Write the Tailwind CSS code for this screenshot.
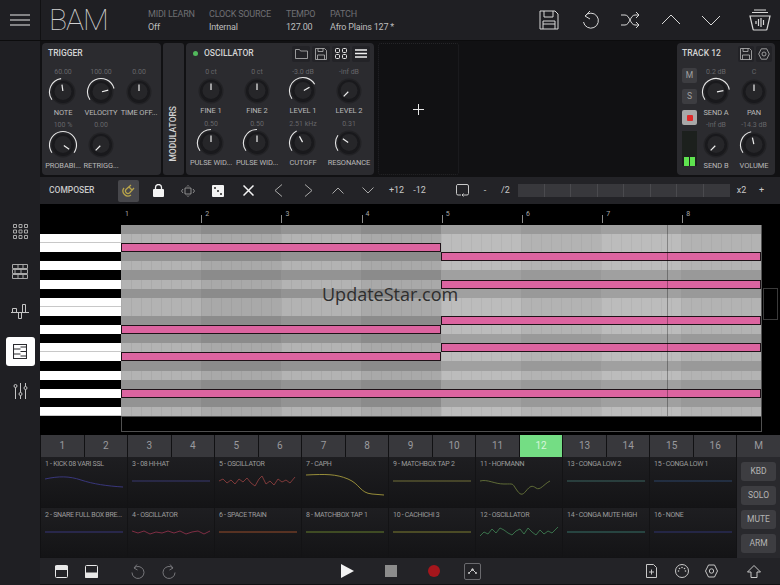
<!doctype html>
<html lang="en">
  <head>
    <meta charset="UTF-8" />
    <title>BAM</title>
    <script src="https://cdn.jsdelivr.net/npm/@tailwindcss/browser@4"></script>
  </head>
  <body class="w-[780px] h-[585px] overflow-hidden bg-[#111113] text-[#bdbdbd] font-['Roboto',sans-serif]">
    <div class="flex flex-col h-[585px]">
      <!-- top bar -->
      <div class="flex h-[41px] shrink-0 bg-[#1f1f23] border-b border-[#0c0c0d]">
        <div class="w-[41px] flex items-center justify-center border-r border-[#111113]">
          <svg width="20" height="12" viewBox="0 0 20 12" stroke="#e8e8e8" stroke-width="1.2"><path d="M0 1h20M0 6h20M0 11h20" /></svg>
        </div>
        <div class="w-[107px] pl-[8px] text-[30px] leading-[39px] font-thin tracking-[-1px] text-[#d0d0d0]">BAM</div>
        <div class="w-[61px] pt-[8px] text-[9px] leading-[13px] tracking-[-0.2px]"><div class="text-[#6f6f73]">MIDI LEARN</div><div>Off</div></div>
        <div class="w-[77px] pt-[8px] text-[9px] leading-[13px] tracking-[-0.2px]"><div class="text-[#6f6f73]">CLOCK SOURCE</div><div>Internal</div></div>
        <div class="w-[44px] pt-[8px] text-[9px] leading-[13px] tracking-[-0.2px]"><div class="text-[#6f6f73]">TEMPO</div><div>127.00</div></div>
        <div class="w-[100px] pt-[8px] text-[9px] leading-[13px] tracking-[-0.2px]"><div class="text-[#6f6f73]">PATCH</div><div class="whitespace-nowrap">Afro Plains 127 *</div></div>
        <div class="ml-[109px] flex items-center gap-[20.500px]" id="top-icons">
          <svg width="20" height="20" viewBox="0 0 20 20" fill="none" stroke="#d8d8d8" stroke-width="1"><path d="M1 1h15l3 3v15H1zM5 1v6h9V1M4 19v-8h12v8M4 14h12" /></svg>
          <svg width="20" height="20" viewBox="0 0 20 20" fill="none" stroke="#d8d8d8" stroke-width="1"><path d="M5 6a7.5 7.5 0 1 1-1.5 6M10 1 5 6l5 3" /></svg>
          <svg width="20" height="20" viewBox="0 0 20 20" fill="none" stroke="#d8d8d8" stroke-width="1"><path d="M1 5h4c5 0 5 10 10 10h4M1 15h4c5 0 5-10 10-10h4M16 2l3 3-3 3M16 12l3 3-3 3" /></svg>
          <svg width="20" height="20" viewBox="0 0 20 20" fill="none" stroke="#d8d8d8" stroke-width="1"><path d="M1 14 10 5l9 9" /></svg>
          <svg width="20" height="20" viewBox="0 0 20 20" fill="none" stroke="#d8d8d8" stroke-width="1"><path d="M1 6l9 9 9-9" /></svg>
          <svg class="ml-[7px]" width="22" height="22" viewBox="0 0 22 22" fill="none" stroke="#d8d8d8" stroke-width="1"><path d="M5 1h12M3 3.500h16M1 7h20l-3 13a1 1 0 0 1-1 1H5a1 1 0 0 1-1-1zM7 12v3M9.500 10v7M12 9v9M14.500 11v5" stroke-width="1.200" /></svg>
        </div>
      </div>

      <div class="flex flex-1 min-h-0">
        <!-- left rail -->
        <div class="w-[40px] shrink-0 bg-[#1f1f23] flex flex-col items-center pt-[183px]">
          <svg width="15" height="15" viewBox="0 0 15 15" fill="none" stroke="#a8a8a8"><path d="M.5.5h3v3h-3zM6 .5h3v3H6zM11.500.5h3v3h-3zM.5 6h3v3h-3zM6 6h3v3H6zM11.500 6h3v3h-3zM.5 11.500h3v3h-3zM6 11.500h3v3H6zM11.500 11.500h3v3h-3z" /></svg>
          <svg class="mt-[25px]" width="16" height="15" viewBox="0 0 16 15" fill="none" stroke="#a8a8a8"><path d="M.5.5h15v4H.5zM.5 5.500h15v4H.5zM.5 10.500h15v4H.5zM6 .5v4M11 .5v4M3 5.500v4M9 5.500v4M6 10.500v4M11 10.500v4" /></svg>
          <svg class="mt-[24px]" width="18" height="17" viewBox="0 0 18 17" fill="none" stroke="#c4c4c4"><path d="M0 9.500h18M1.500 5.500h4v4h-4zM7.500 9.500h3v6h-3zM11.500 1.500h3v8h-3z" /></svg>
          <div class="mt-[17px] w-[29px] h-[29px] bg-white rounded-[3px] flex items-center justify-center">
            <svg width="14" height="15" viewBox="0 0 14 15" fill="none" stroke="#2a2a2e" stroke-width="1.100"><path d="M.5.5h13v14H.5zM.5 5h7M.5 10h7M7.500 3h6M7.500 7.500h6M7.500 12h6" /></svg>
          </div>
          <svg class="mt-[17px]" width="15" height="16" viewBox="0 0 15 16" fill="none" stroke="#c4c4c4"><circle cx="2.500" cy="3" r="1.500" /><circle cx="7.500" cy="11" r="1.500" /><circle cx="12.500" cy="5" r="1.500" /><path d="M2.500 4.500V16M7.500 0v9.500M7.500 12.500V16M12.500 0v3.500M12.500 6.500V16" /></svg>
        </div>

        <div class="flex-1 min-w-0 flex flex-col">
          <!-- device panels -->
          <div class="h-[136px] shrink-0 flex pl-[2px] pt-[2px] pb-[2px] gap-[2px]">
            <div class="w-[119px] rounded-[4px] bg-[#2b2b2f] px-[2px] pt-[4px]">
              <div class="pl-[4px] h-[20px] text-[8.500px] leading-[13px] font-medium text-[#d4d4d4]">TRIGGER</div>
              <div class="grid grid-cols-3 w-[114px]" id="trigger"></div>
            </div>
            <div class="w-[21px] rounded-[3px] bg-[#2b2b2f] flex items-end justify-center pb-[13px]">
              <span class="[writing-mode:vertical-rl] rotate-180 text-[8.500px] font-medium text-[#d4d4d4]">MODULATORS</span>
            </div>
            <div class="w-[188px] rounded-[4px] bg-[#2b2b2f] px-[2px] pt-[2px]">
              <div class="flex items-center h-[17px] mb-[5px] pl-[5px]">
                <span class="w-[5px] h-[5px] rounded-full bg-[#52b95c]"></span>
                <span class="ml-[6px] text-[8.500px] font-medium text-[#d4d4d4]">OSCILLATOR</span>
                <div class="ml-auto flex gap-[2px] pr-[2px]">
                  <div class="w-[18px] h-[16px] bg-[#232327] rounded-[2px] flex items-center justify-center"><svg width="13" height="10" viewBox="0 0 13 10" fill="none" stroke="#b8b8b8" stroke-width=".8"><path d="M.5.5h4l1 1.500h7v7.500H.5z" /></svg></div>
                  <div class="w-[18px] h-[16px] bg-[#232327] rounded-[2px] flex items-center justify-center"><svg width="12" height="12" viewBox="0 0 12 12" fill="none" stroke="#b8b8b8" stroke-width=".8"><path d="M.5.5h9l2 2v9H.5zM3 .5v3h5v-3M2.500 11.500V7h7v4.500" /></svg></div>
                  <div class="w-[18px] h-[16px] bg-[#232327] rounded-[2px] flex items-center justify-center"><svg width="12" height="11" viewBox="0 0 12 11" fill="none" stroke="#e6e6e6"><rect x=".5" y=".5" width="4" height="4" rx="1" /><rect x="7.500" y=".5" width="4" height="4" rx="1" /><rect x=".5" y="6.500" width="4" height="4" rx="1" /><rect x="7.500" y="6.500" width="4" height="4" rx="1" /></svg></div>
                  <div class="w-[18px] h-[16px] bg-[#232327] rounded-[2px] flex items-center justify-center"><svg width="12" height="9" viewBox="0 0 12 9" stroke="#f0f0f0" stroke-width="1.300"><path d="M0 1h12M0 4.500h12M0 8h12" /></svg></div>
                </div>
              </div>
              <div class="grid grid-cols-4 w-[184px]" id="osc"></div>
            </div>
            <div class="ml-[2px] w-[81px] border border-dotted border-[#252528] rounded-[3px] flex items-center justify-center">
              <svg width="11" height="11" viewBox="0 0 11 11" stroke="#e8e8e8"><path d="M5.500 0v11M0 5.500h11" /></svg>
            </div>
            <div class="ml-auto mr-[5px] w-[98px] rounded-[4px] bg-[#2b2b2f] pt-[2px] pl-[5px]">
              <div class="flex items-center h-[17px] mb-[5px]">
                <span class="text-[8.500px] font-medium text-[#d4d4d4]">TRACK 12</span>
                <div class="ml-auto flex gap-[2px] pr-[3px]">
                  <div class="w-[16px] h-[16px] bg-[#232327] rounded-[2px] flex items-center justify-center"><svg width="12" height="12" viewBox="0 0 12 12" fill="none" stroke="#b8b8b8" stroke-width=".8"><path d="M.5.5h9l2 2v9H.5zM3 .5v3h5v-3M2.500 11.500V7h7v4.500" /></svg></div>
                  <div class="w-[16px] h-[16px] bg-[#232327] rounded-[2px] flex items-center justify-center"><svg width="12" height="12" viewBox="0 0 12 12" fill="none" stroke="#b8b8b8" stroke-width=".8"><path d="M3.300.8h5.400L11.300 6 8.700 11.200H3.300L.7 6z" /><circle cx="6" cy="6" r="2" /></svg></div>
                </div>
              </div>
              <div class="flex">
                <div class="w-[15px] flex flex-col gap-[6px] pt-[1px]">
                  <div class="h-[15px] rounded-[2px] bg-[#3d3d41] text-[8.500px] leading-[15px] text-center text-[#a0a0a0]">M</div>
                  <div class="h-[15px] rounded-[2px] bg-[#3d3d41] text-[8.500px] leading-[15px] text-center text-[#a0a0a0]">S</div>
                  <div class="h-[15px] rounded-[2px] bg-[#a8a8a8] flex items-center justify-center"><span class="w-[6px] h-[6px] rounded-[1px] bg-[#e02a2a]"></span></div>
                  <div class="h-[35px] flex gap-[1px] justify-center items-end px-[2px] bg-[#1c201d]">
                    <span class="w-[5px] h-[9px] bg-[#5ee34f]"></span><span class="w-[5px] h-[9px] bg-[#5ee34f]"></span>
                  </div>
                </div>
                <div class="grid grid-cols-2 w-[76px]" id="track"></div>
              </div>
            </div>
          </div>

          <!-- composer toolbar -->
          <div class="h-[27px] shrink-0 flex items-center bg-[#232327] text-[9px] text-[#c8c8c8]">
            <div class="w-[73px] shrink-0 pl-[9px] text-[8.500px] font-medium">COMPOSER</div>
            <div class="w-[30px] shrink-0 flex justify-center"><div class="w-[21px] h-[22px] bg-[#47474b] rounded-[2px] flex items-center justify-center"><svg width="13" height="13" viewBox="0 0 13 13" fill="none" stroke="#b8a44a" stroke-width="1.300"><path d="M9 1 4 5.500a2.500 2.500 0 0 0 3.500 3.500L12 4M6.500 2.500l4 4M2 4a5 5 0 0 0 7 7" /></svg></div></div>
            <div class="w-[30px] shrink-0 flex justify-center"><svg width="11" height="13" viewBox="0 0 11 13" fill="#f4f4f4"><rect y="5" width="11" height="8" rx="1" /><path d="M2.500 5V3.500a3 3 0 0 1 6 0V5" fill="none" stroke="#f4f4f4" stroke-width="1.300" /></svg></div>
            <div class="w-[30px] shrink-0 flex justify-center"><svg width="14" height="12" viewBox="0 0 14 12" fill="none" stroke="#a8a8a8" stroke-width=".8"><path d="M4 3h6v6H4zM2 4 .5 6 2 8M12 4l1.500 2L12 8M6 1.500 7 .5l1 1M6 10.500l1 1 1-1" /></svg></div>
            <div class="w-[30px] shrink-0 flex justify-center"><svg width="12" height="12" viewBox="0 0 12 12"><rect width="12" height="12" rx="1" fill="#f2f2f2" /><circle cx="3" cy="3" r="1" fill="#222" /><circle cx="6" cy="6" r="1" fill="#222" /><circle cx="9" cy="9" r="1" fill="#222" /></svg></div>
            <div class="w-[30px] shrink-0 flex justify-center"><svg width="11" height="11" viewBox="0 0 11 11" stroke="#f4f4f4" stroke-width="1.500"><path d="M.5.5l10 10M10.500.5l-10 10" /></svg></div>
            <div class="w-[30px] shrink-0 flex justify-center"><svg width="9" height="13" viewBox="0 0 9 13" fill="none" stroke="#a8a8a8"><path d="M8 .5 1 6.500 8 12.500" /></svg></div>
            <div class="w-[30px] shrink-0 flex justify-center"><svg width="9" height="13" viewBox="0 0 9 13" fill="none" stroke="#a8a8a8"><path d="M1 .5 8 6.500 1 12.500" /></svg></div>
            <div class="w-[30px] shrink-0 flex justify-center"><svg width="12" height="7" viewBox="0 0 12 7" fill="none" stroke="#a8a8a8"><path d="M.5 6.500 6 1l5.500 5.500" /></svg></div>
            <div class="w-[30px] shrink-0 flex justify-center"><svg width="12" height="7" viewBox="0 0 12 7" fill="none" stroke="#a8a8a8"><path d="M.5.5 6 6 11.500.5" /></svg></div>
            <div class="ml-[2px] w-[23px] shrink-0 text-center">+12</div>
            <div class="w-[23px] shrink-0 text-center">-12</div>
            <div class="ml-[20px] w-[22px] shrink-0 flex justify-center"><svg width="13" height="13" viewBox="0 0 13 13" fill="none" stroke="#c8c8c8"><path d="M5 11H2a1.500 1.500 0 0 1-1.500-1.500v-8A1.500 1.500 0 0 1 2 .5h9A1.500 1.500 0 0 1 12.500 2v7.500A1.500 1.500 0 0 1 11 11H6M7.500 9.500 6 11l1.500 1.500" /></svg></div>
            <div class="w-[24px] shrink-0 text-center">-</div>
            <div class="w-[17px] shrink-0 text-center">/2</div>
            <div class="ml-[4px] w-[212px] h-[13px] shrink-0 grid grid-cols-8 bg-[#38383c]">
              <span class="border-r border-[#4a4a4e]"></span><span class="border-r border-[#4a4a4e]"></span><span class="border-r border-[#4a4a4e]"></span><span class="border-r border-[#4a4a4e]"></span><span class="border-r border-[#4a4a4e]"></span><span class="border-r border-[#4a4a4e]"></span><span class="border-r border-[#4a4a4e]"></span><span></span>
            </div>
            <div class="w-[23px] shrink-0 text-center">x2</div>
            <div class="w-[17px] shrink-0 text-center">+</div>
          </div>

          <!-- piano roll -->
          <div class="relative h-[231px] shrink-0 bg-black">
            <div class="flex h-[21px] pl-[81px] text-[7px] text-[#a8a8a8]" id="ruler"></div>
            <div class="flex">
              <div class="w-[81px] shrink-0" id="keys"></div>
              <div class="relative w-[641px] shrink-0 border-r border-[#555]" id="grid"></div>
            </div>
            <div class="ml-[81px] h-[16px] w-[641px] border border-[#505050]"></div>
            <div class="absolute left-[723px] top-[84px] w-[15px] h-[32px] border border-[#3a3a3a]"></div>
            <div class="absolute left-[282px] top-[78px] text-[18px] leading-[24px] text-[#2e2e2e] font-['Open_Sans',sans-serif]">UpdateStar.com</div>
          </div>

          <!-- tabs -->
          <div class="h-[22px] shrink-0 pl-[1px] grid grid-cols-[repeat(17,1fr)] gap-[1px] text-[10px]" id="tabs"></div>

          <!-- tracks -->
          <div class="flex h-[101px] shrink-0">
            <div class="w-[696px] shrink-0 ml-[1px] grid grid-cols-8 grid-rows-[51px_50px] bg-[#131315]" id="cards"></div>
            <div class="flex-1 bg-[#29292d] flex flex-col gap-[5px] px-[4px] pt-[5px] text-[8.500px] text-[#b4b4b4]">
              <div class="h-[19px] rounded-[3px] bg-[#3d3d41] text-center leading-[19px]">KBD</div>
              <div class="h-[19px] rounded-[3px] bg-[#3d3d41] text-center leading-[19px]">SOLO</div>
              <div class="h-[19px] rounded-[3px] bg-[#3d3d41] text-center leading-[19px]">MUTE</div>
              <div class="h-[19px] rounded-[3px] bg-[#3d3d41] text-center leading-[19px]">ARM</div>
            </div>
          </div>

          <!-- bottom bar -->
          <div class="h-[26px] shrink-0 flex items-center bg-[#232327]">
            <svg class="ml-[15px]" width="13" height="13" viewBox="0 0 13 13" fill="none" stroke="#e8e8e8"><rect x=".5" y=".5" width="12" height="12" rx="1" /><path d="M.5 1h12v3.500H.5z" fill="#e8e8e8" /></svg>
            <svg class="ml-[17px]" width="13" height="13" viewBox="0 0 13 13" fill="none" stroke="#e8e8e8"><rect x=".5" y=".5" width="12" height="12" rx="1" /><path d="M.5 8h12v4.500H.5z" fill="#e8e8e8" /></svg>
            <svg class="ml-[33px]" width="14" height="15" viewBox="0 0 14 15" fill="none" stroke="#77777b"><path d="M3 4a6 6 0 1 1-2 4.500M6 .5 3 4l3.500 2" /></svg>
            <svg class="ml-[17px]" width="14" height="15" viewBox="0 0 14 15" fill="none" stroke="#77777b"><path d="M11 4a6 6 0 1 0 2 4.500M8 .5 11 4 7.500 6" /></svg>
            <svg class="ml-[165px]" width="13" height="14" viewBox="0 0 13 14" fill="#f2f2f2"><path d="M0 0l13 7-13 7z" /></svg>
            <div class="ml-[31px] w-[12px] h-[12px] bg-[#8c8c8c]"></div>
            <div class="ml-[31px] w-[12px] h-[12px] rounded-full bg-[#a5161c]"></div>
            <div class="ml-[24px] w-[17px] h-[17px] border border-[#6a6a6e] rounded-[2px] flex items-center justify-center"><svg width="9" height="6" viewBox="0 0 9 6" fill="none" stroke="#c8c8c8"><path d="M1 5 4.500 1.500 8 5" /><circle cx="4.500" cy="1.500" r=".8" fill="#c8c8c8" /><circle cx="1" cy="5" r=".6" fill="#c8c8c8" /><circle cx="8" cy="5" r=".6" fill="#c8c8c8" /></svg></div>
            <svg class="ml-[165px]" width="11" height="14" viewBox="0 0 11 14" fill="none" stroke="#c8c8c8"><path d="M.5.5h7l3 3v10H.5zM3 8h5M5.500 5.500v5" /></svg>
            <svg class="ml-[18px]" width="14" height="14" viewBox="0 0 14 14" fill="none" stroke="#c8c8c8"><circle cx="7" cy="7" r="6.500" /><g fill="#c8c8c8" stroke="none"><circle cx="3.500" cy="7" r=".8" /><circle cx="4.500" cy="4.500" r=".8" /><circle cx="7" cy="3.500" r=".8" /><circle cx="9.500" cy="4.500" r=".8" /><circle cx="10.500" cy="7" r=".8" /></g></svg>
            <svg class="ml-[16px]" width="13" height="14" viewBox="0 0 13 14" fill="none" stroke="#c8c8c8"><path d="M3.500 1h6l3 6-3 6h-6l-3-6z" /><circle cx="6.500" cy="7" r="2.200" /></svg>
            <svg class="ml-[29px]" width="14" height="13" viewBox="0 0 14 13" fill="none" stroke="#c8c8c8"><path d="M7 .5 13.500 7H10v5.500H4V7H.5z" /></svg>
          </div>
        </div>
      </div>
    </div>

    <script>
      // knobs: a = pointer angle from 12 o'clock, arc = draws the value arc
      function knob(k) {
        const r = 13.5;
        const pt = (d) => {
          const t = ((d - 90) * Math.PI) / 180;
          return (15 + r * Math.cos(t)).toFixed(2) + ' ' + (15 + r * Math.sin(t)).toFixed(2);
        };
        const arc = k.arc
          ? `<path d="M${pt(-125)} A${r} ${r} 0 ${k.a + 125 > 180 ? 1 : 0} 1 ${pt(k.a)}" fill="none" stroke="#e6e6e6" stroke-width="1.1" />`
          : '';
        return `<svg width="30" height="30" viewBox="0 0 30 30">
          <circle cx="15" cy="15" r="12.500" fill="#222225" />
          <circle cx="15" cy="15" r="11" fill="#19191c" />
          <circle cx="15" cy="14.500" r="8.500" fill="#262629" />
          <line x1="15" y1="7.500" x2="15" y2="14" stroke="#efefef" stroke-width="1.200" transform="rotate(${k.a} 15 15)" />
          ${arc}</svg>`;
      }
      function knobCell(k, tight) {
        return `<div class="flex flex-col items-center ${tight ? 'h-[52px]' : 'h-[53px]'}">
          <div class="h-[10px] text-[7px] leading-[10px] text-[#66666a]">${k.v}</div>
          <div class="${tight ? '-mt-[1px]' : ''}">${knob(k)}</div>
          <div class="${tight ? 'mt-[0px]' : 'mt-[1px]'} h-[10px] text-[7.500px] leading-[10px] whitespace-nowrap tracking-[-0.1px] text-[#b8b8b8]">${k.l}</div>
        </div>`;
      }
      const trigger = [
        { v: '60.00', l: 'NOTE', a: -8, arc: true },
        { v: '100.00', l: 'VELOCITY', a: 75, arc: true },
        { v: '0.00', l: 'TIME OFF...', a: 0 },
        { v: '100 %', l: 'PROBABI...', a: 125, arc: true },
        { v: '0.00', l: 'RETRIGG...', a: -135 },
      ];
      const osc = [
        { v: '0 ct', l: 'FINE 1', a: 0 },
        { v: '0 ct', l: 'FINE 2', a: 0 },
        { v: '-3.0 dB', l: 'LEVEL 1', a: 60, arc: true },
        { v: '-inf dB', l: 'LEVEL 2', a: -135 },
        { v: '0.50', l: 'PULSE WID...', a: 0, arc: true },
        { v: '0.50', l: 'PULSE WID...', a: 0, arc: true },
        { v: '2.51 kHz', l: 'CUTOFF', a: -28, arc: true },
        { v: '0.31', l: 'RESONANCE', a: -55, arc: true },
      ];
      const track = [
        { v: '0.2 dB', l: 'SEND A', a: 80, arc: true },
        { v: 'C', l: 'PAN', a: 0 },
        { v: '-inf dB', l: 'SEND B', a: -135 },
        { v: '-14.3 dB', l: 'VOLUME', a: -12, arc: true },
      ];
      document.getElementById('trigger').innerHTML = trigger.map((k) => knobCell(k)).join('');
      document.getElementById('osc').innerHTML = osc.map((k) => knobCell(k, true)).join('');
      document.getElementById('track').innerHTML = track.map((k) => knobCell(k)).join('');

      // ruler
      let ruler = '';
      for (let i = 1; i <= 8; i++) {
        ruler += `<div class="w-[80.200px] relative pl-[4px] pt-[6px] leading-[9px]">${i}${
          i > 1 ? '<span class="absolute left-0 top-[11px] h-[8px] w-px bg-[#8a8a8a]"></span>' : ''
        }</div>`;
      }
      document.getElementById('ruler').innerHTML = ruler;

      // rows: b = black key row. notes in px from grid left
      const black = [1, 0, 0, 1, 0, 1, 0, 1, 0, 0, 1, 0, 1, 0, 0, 1, 0, 1, 0, 1, 0];
      const notes = { 2: [0, 320], 3: [320, 640], 6: [320, 640], 10: [320, 640], 11: [0, 320], 13: [320, 640], 14: [0, 320], 18: [0, 640] };
      document.getElementById('keys').innerHTML = black
        .map((b, i) => {
          const line = !b && !black[i + 1] ? 'border-b border-[#c8c8c8]' : '';
          return `<div class="h-[9.100px] box-border ${b ? 'bg-black' : 'bg-white ' + line}"></div>`;
        })
        .join('');
      let grid = black
        .map((b, i) => {
          const n = notes[i];
          const note = n
            ? `<div class="absolute z-10 top-0 h-[9px] bg-[#dc64a0] border border-[#1f1218]" style="left:${n[0]}px;width:${n[1] - n[0]}px"></div>`
            : '';
          const cls = b
            ? 'bg-[#939393]'
            : 'bg-[#b3b3b3] bg-[repeating-linear-gradient(90deg,#aaaaaa_0,#aaaaaa_1px,transparent_1px,transparent_10px)]';
          return `<div class="relative h-[9.100px] box-border ${cls}">${note}</div>`;
        })
        .join('');
      // bar shading, lies over the rows; the second half of the loop is lighter
      [80, 240, 400, 560].forEach((x) => {
        grid += `<div class="absolute top-0 bottom-0 w-[80px] bg-black/5 pointer-events-none" style="left:${x}px"></div>`;
      });
      grid += '<div class="absolute top-0 bottom-0 left-[320px] w-[320px] bg-white/12"></div>';
      grid += '<div class="absolute z-20 top-0 bottom-0 left-[546px] w-px bg-black/30"></div>';
      document.getElementById('grid').innerHTML = grid;

      // tabs
      let tabs = '';
      for (let i = 1; i <= 16; i++) {
        tabs += `<div class="text-center leading-[22px] ${i === 12 ? 'bg-[#74dd84] text-[#d8f5dc]' : 'bg-[#38383c] text-[#9a9a9e]'}">${i}</div>`;
      }
      tabs += '<div class="text-center leading-[22px] bg-[#38383c] text-[#9a9a9e]">M</div>';
      document.getElementById('tabs').innerHTML = tabs;

      // track cards, laid out row by row
      const flat = 'M0 12H78';
      const cards = [
        ['1 - KICK 08 VARI SSL', '#3c3a86', 'M0 10C14 7 24 7 36 11S62 17 78 18'],
        ['3 - 08 HI-HAT', '#3d3c7c', flat],
        ['5 - OSCILLATOR', '#8a3d3d', 'M0 12L4 10 8 14 12 11 16 15 20 10 24 13 28 9 32 14 36 17 40 10 43 7 47 15 51 12 55 16 59 10 63 13 67 11 71 14 76 8'],
        ['7 - CAPH', '#a59a3c', 'M0 6C20 5 30 5 42 10S54 24 66 25L78 26'],
        ['9 - MATCHBOX TAP 2', '#7d7a3c', flat],
        ['11 - HOFMANN', '#66743a', 'M0 12C8 10 14 15 24 15S32 14 36 20 42 27 46 22 52 16 56 19 64 15 70 12 76 10L78 10'],
        ['13 - CONGA LOW 2', '#3e6e6a', flat],
        ['15 - CONGA LOW 1', '#2f4a72', flat],
        ['2 - SNARE FULL BOX BRE...', '#3c3a86', flat],
        ['4 - OSCILLATOR', '#8a3048', 'M0 11L6 13 12 11 18 14 24 12 30 13 36 11 42 13 48 11 54 14 60 12 66 11 72 14 78 11'],
        ['6 - SPACE TRAIN', '#a6542c', flat],
        ['8 - MATCHBOX TAP 1', '#6f8a30', flat],
        ['10 - CACHICHI 3', '#8a8a34', flat],
        ['12 - OSCILLATOR', '#3d7a50', 'M0 16L4 12 8 14 12 9 16 13 20 8 24 10 28 13 32 15 36 11 40 9 44 14 48 8 52 12 56 15 60 10 64 14 68 11 72 13 78 7'],
        ['14 - CONGA MUTE HIGH', '#3a7a70', flat],
        ['16 - NONE', '#34397c', flat],
      ];
      document.getElementById('cards').innerHTML = cards
        .map(
          (c) => `<div class="pl-[4px] pt-[2px] mr-[1px] mb-[1px] bg-gradient-to-b from-[#1e1e21] to-[#141416]">
            <div class="h-[10px] text-[7px] leading-[10px] whitespace-nowrap tracking-[-0.3px] text-[#9c9c9c]">${c[0]}</div>
            <svg width="78" height="28" viewBox="0 0 78 28" fill="none" stroke="${c[1]}" stroke-width=".9"><path d="${c[2]}" /></svg>
          </div>`
        )
        .join('');
    </script>
  </body>
</html>
